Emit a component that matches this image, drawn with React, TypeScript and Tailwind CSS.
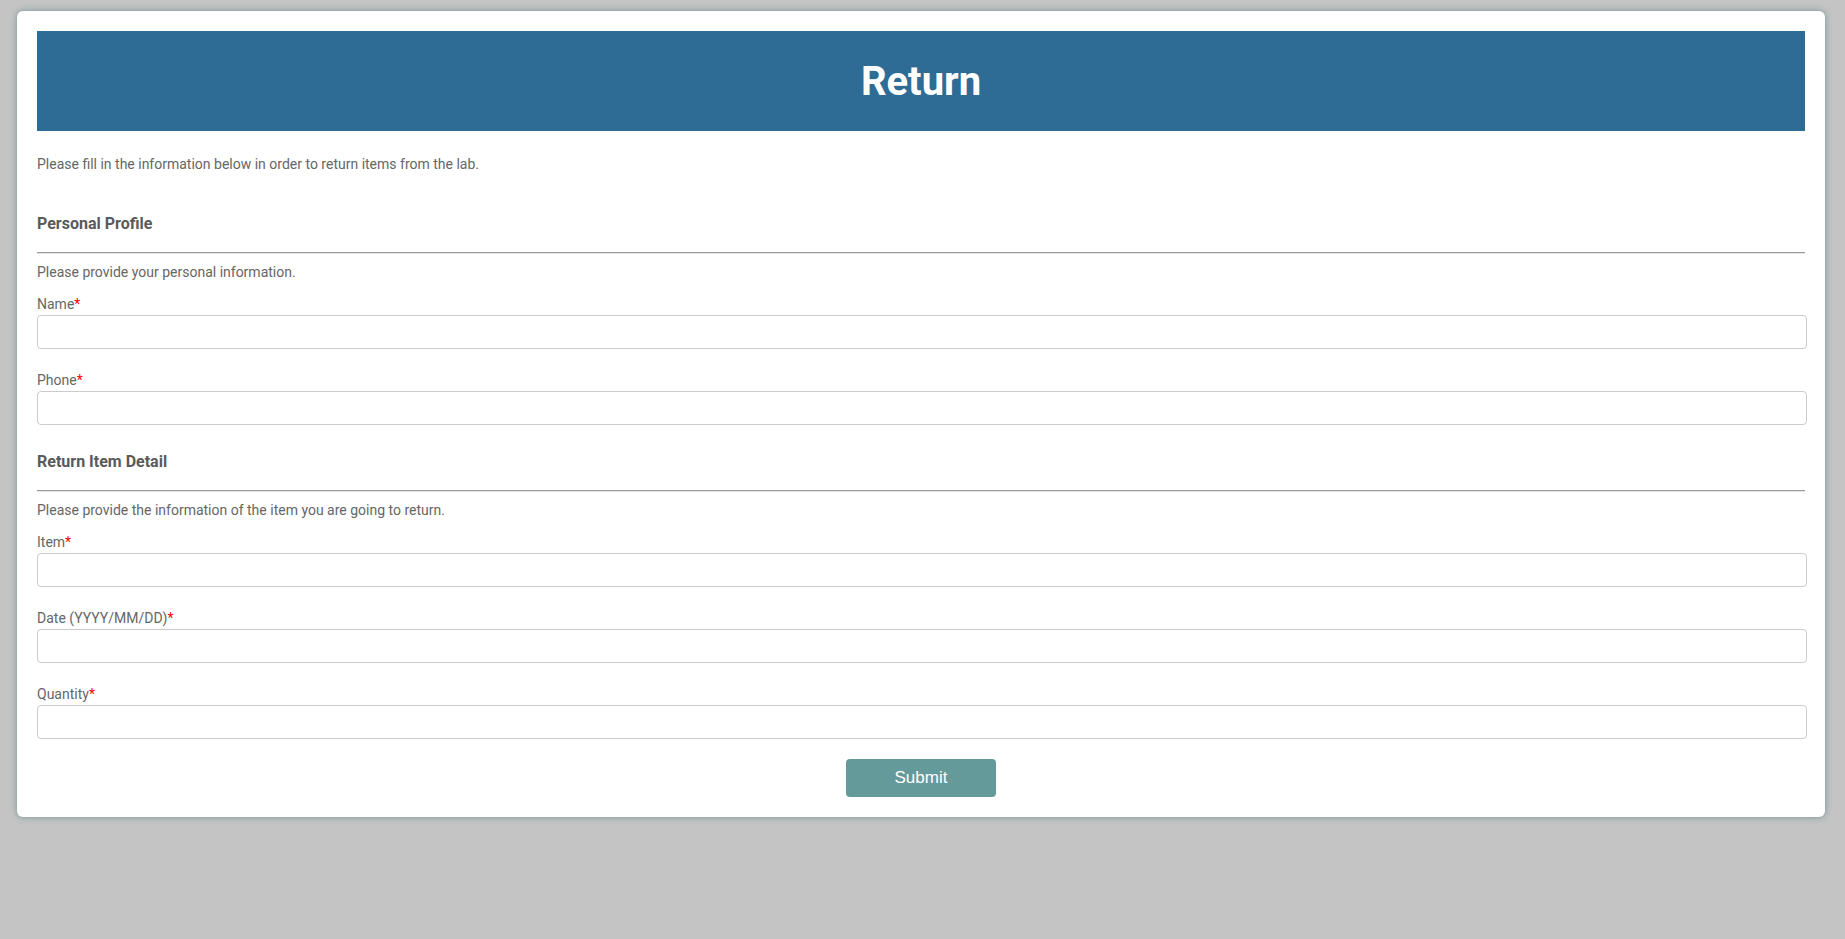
import React from 'react';

interface FieldProps {
    label: string;
    first?: boolean;
}

function Field({ label, first }: FieldProps) {
    return (
        <div className={first ? 'mt-[12px]' : 'mt-[21px]'}>
            <label className="block text-[14px] leading-[20px] text-[#666]">
                {label}
                <span className="text-[#ff0000]">*</span>
            </label>
            <input
                type="text"
                className="mt-px block h-[34px] w-[calc(100%+2px)] rounded-[4px] border border-[#ccc] bg-white px-2 outline-none"
            />
        </div>
    );
}

interface SectionProps {
    title: string;
    note: string;
    fields: string[];
    top: string;
}

function Section({ title, note, fields, top }: SectionProps) {
    return (
        <section className={top}>
            <h2 className="text-[16px] font-bold leading-[20px] text-[#5a5a5a]">{title}</h2>
            <hr className="mt-[18px] border-0 border-t border-b border-t-[#9a9a9a] border-b-[#e4e4e4]" />
            <p className="mt-[8px] text-[14px] leading-[20px] text-[#666]">{note}</p>
            {fields.map((f, i) => (
                <Field key={f} label={f} first={i === 0} />
            ))}
        </section>
    );
}

export default function App() {
    return (
        <div
            className="min-h-[939px] bg-[#c4c4c4] pt-[11px] pl-[17px] pr-[20px]"
            style={{ fontFamily: 'Roboto, "Liberation Sans", Arial, sans-serif' }}
        >
            <div className="rounded-[6px] bg-white p-[20px] shadow-[0_0_6px_rgba(70,120,120,0.65)]">
                <div className="flex h-[100px] items-center justify-center bg-[#2e6c96] pt-[2px]">
                    <h1 className="text-[40px] font-bold text-white">Return</h1>
                </div>
                <p className="mt-[23px] text-[14px] leading-[20px] text-[#666]">
                    Please fill in the information below in order to return items from the lab.
                </p>
                <Section
                    top="mt-[40px]"
                    title="Personal Profile"
                    note="Please provide your personal information."
                    fields={['Name', 'Phone']}
                />
                <Section
                    top="mt-[27px]"
                    title="Return Item Detail"
                    note="Please provide the information of the item you are going to return."
                    fields={['Item', 'Date (YYYY/MM/DD)', 'Quantity']}
                />
                <div className="mt-[20px] flex justify-center">
                    <button
                        type="button"
                        className="h-[38px] w-[150px] rounded-[4px] bg-[#659a9a] text-[17px] text-white"
                        style={{ fontFamily: '"Liberation Sans", Arial, sans-serif' }}
                    >
                        Submit
                    </button>
                </div>
            </div>
        </div>
    );
}
